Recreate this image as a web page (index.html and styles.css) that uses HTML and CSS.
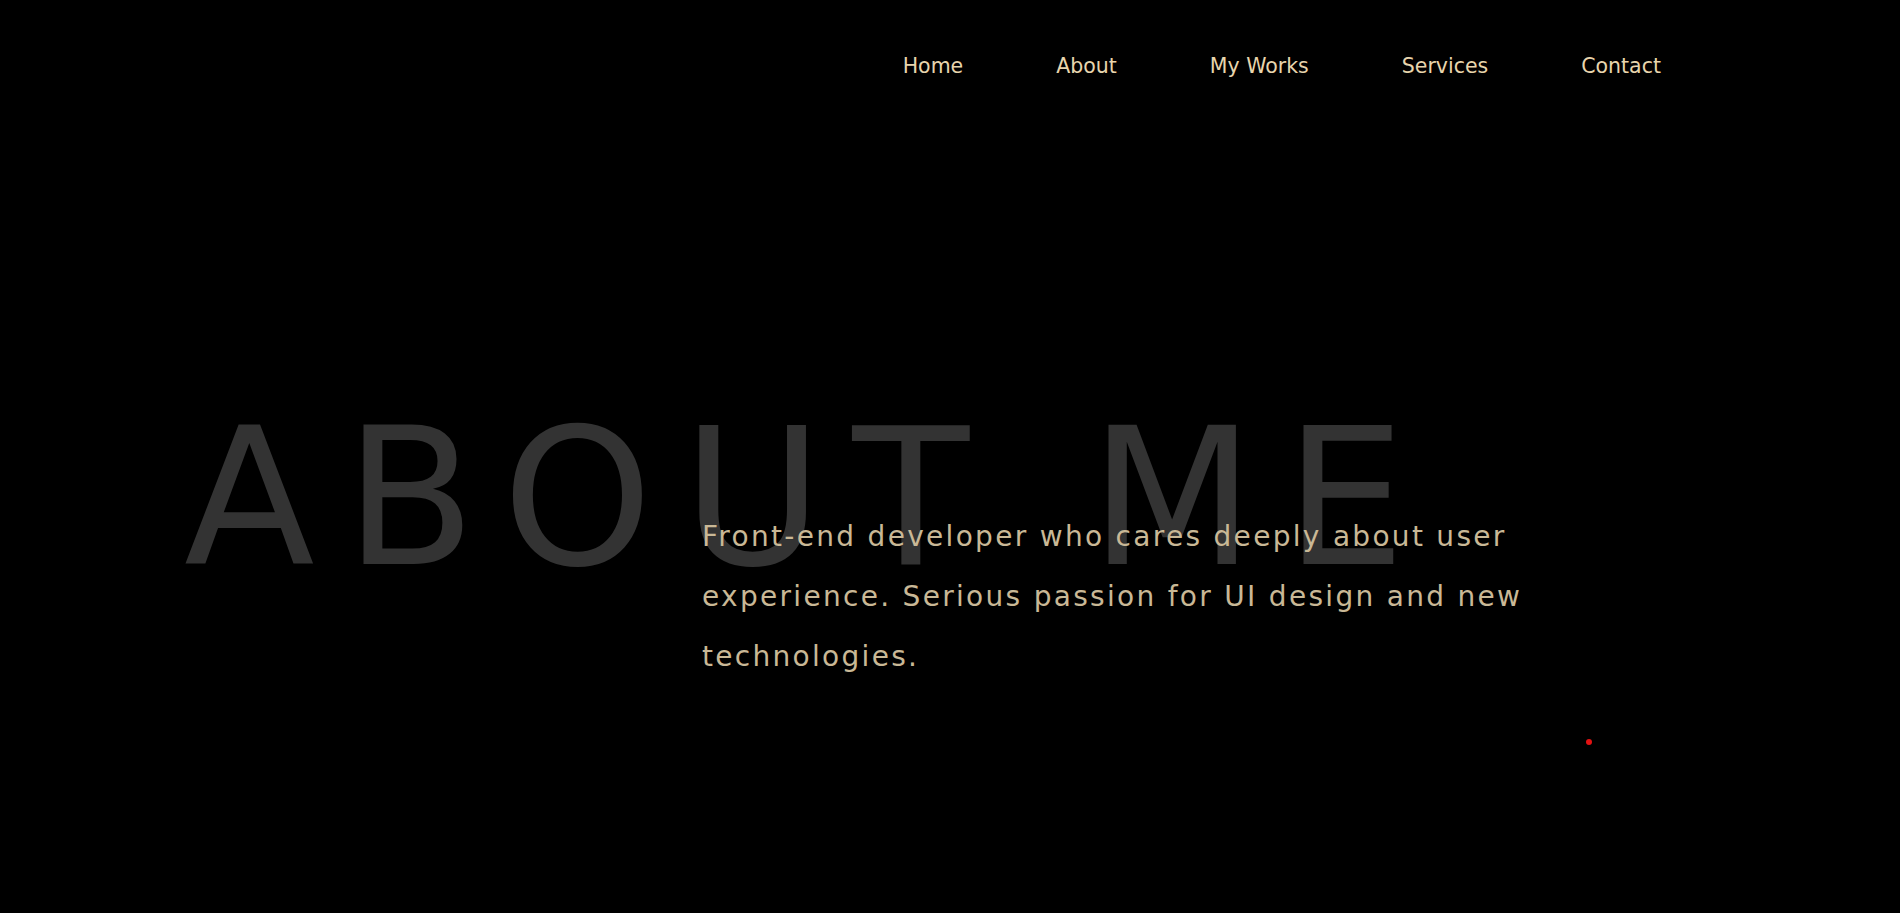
FILE: index.html
```html
<!DOCTYPE html>
<html lang="en">
<head>
<meta charset="utf-8">
<title>About Me</title>
<link rel="stylesheet" href="styles.css">
</head>
<body>
<header class="site-header">
  <nav class="nav">
    <a class="nav-link" href="#home">Home</a>
    <a class="nav-link" href="#about">About</a>
    <a class="nav-link" href="#works">My Works</a>
    <a class="nav-link" href="#services">Services</a>
    <a class="nav-link" href="#contact">Contact</a>
  </nav>
</header>
<main class="about">
  <div class="about-stack">
    <h1 class="about-title">ABOUT ME</h1>
    <p class="about-text">Front-end developer who cares deeply about user experience. Serious passion for UI design and new technologies.</p>
  </div>
</main>
<div class="cursor-dot"></div>
</body>
</html>
```
FILE: styles.css
```css
html, body {
  margin: 0;
  padding: 0;
  background: #000;
  height: 100%;
  overflow: hidden;
}
body {
  font-family: "DejaVu Sans", "Noto Sans", sans-serif;
  position: relative;
}
.site-header {
  display: flex;
  justify-content: flex-end;
  padding: 54px 239px 0 0;
}
.nav {
  display: flex;
  gap: 93px;
}
.nav-link {
  color: #e8d5ad;
  text-decoration: none;
  font-size: 20.5px;
  line-height: 24px;
}
.about {
  padding: 0 0 0 184px;
}
.about-stack {
  display: grid;
  margin-top: 325px;
}
.about-title {
  grid-area: 1 / 1;
  margin: 0;
  color: #333333;
  font-weight: 400;
  font-size: 191px;
  line-height: 191px;
  letter-spacing: 30px;
  white-space: nowrap;
}
.about-text {
  grid-area: 1 / 1;
  margin: 104px 0 0 518px;
  width: 860px;
  color: #c9b896;
  font-size: 28px;
  line-height: 60px;
  letter-spacing: 2.3px;
}
.cursor-dot {
  position: absolute;
  left: 1586px;
  top: 739px;
  width: 6px;
  height: 6px;
  border-radius: 50%;
  background: #e41212;
}
```
